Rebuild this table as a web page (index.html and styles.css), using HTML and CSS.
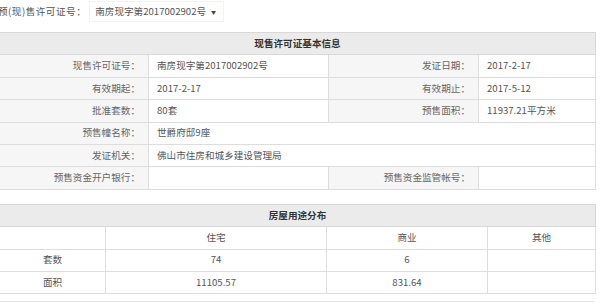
FILE: index.html
```html
<!DOCTYPE html>
<html lang="zh-CN">
<head>
<meta charset="utf-8">
<title>预售许可证</title>
<link rel="stylesheet" href="styles.css">
</head>
<body>
<div class="page">
  <div class="picker">
    <span class="picker-label">预(现)售许可证号：</span>
    <span class="picker-box">南房现字第2017002902号<span class="caret">▼</span></span>
  </div>

  <table class="info">
    <colgroup>
      <col class="c1"><col class="c2"><col class="c3"><col class="c4">
    </colgroup>
    <tr class="head"><th colspan="4">现售许可证基本信息</th></tr>
    <tr><td class="lbl">现售许可证号：</td><td>南房现字第2017002902号</td><td class="lbl">发证日期：</td><td>2017-2-17</td></tr>
    <tr><td class="lbl">有效期起：</td><td>2017-2-17</td><td class="lbl">有效期止：</td><td>2017-5-12</td></tr>
    <tr><td class="lbl">批准套数：</td><td>80套</td><td class="lbl">预售面积：</td><td>11937.21平方米</td></tr>
    <tr><td class="lbl">预售幢名称：</td><td colspan="3">世爵府邸9座</td></tr>
    <tr><td class="lbl">发证机关：</td><td colspan="3">佛山市住房和城乡建设管理局</td></tr>
    <tr><td class="lbl">预售资金开户银行：</td><td></td><td class="lbl">预售资金监管帐号：</td><td></td></tr>
  </table>

  <table class="usage">
    <colgroup>
      <col class="u1"><col class="u2"><col class="u3"><col class="u4">
    </colgroup>
    <tr class="head"><th colspan="4">房屋用途分布</th></tr>
    <tr><td></td><td>住宅</td><td>商业</td><td>其他</td></tr>
    <tr><td>套数</td><td>74</td><td>6</td><td></td></tr>
    <tr><td>面积</td><td>11105.57</td><td>831.64</td><td></td></tr>
  </table>

  <div class="next"></div>
</div>
</body>
</html>
```

FILE: styles.css
```css
html, body {
  margin: 0;
  padding: 0;
  background: #ffffff;
  overflow: hidden;
}

body {
  font-family: "Noto Sans CJK SC", "Microsoft YaHei", sans-serif;
  font-size: 9.6px;
  color: #555;
}

.page {
  width: 601px;
  margin-left: -1px;
}

.picker {
  display: flex;
  align-items: center;
  height: 22px;
  margin-left: -1px;
}

.picker-label {
  color: #555;
  letter-spacing: 0.5px;
}

.picker-box {
  display: inline-flex;
  align-items: center;
  height: 19px;
  margin-left: 3px;
  padding: 0 7px 0 5px;
  border: 1px solid #f3f3f3;
  color: #555;
}

.caret {
  font-size: 5px;
  margin-left: 5px;
  color: #444;
}

table {
  border-collapse: collapse;
  table-layout: fixed;
  width: 596px;
}

th, td {
  border: 1px solid #dddddd;
  height: 21.4px;
  padding: 0 8px;
  line-height: 1;
  white-space: nowrap;
  overflow: hidden;
}

.info {
  margin-top: 10px;
}

.head th {
  background: #ebebeb;
  font-weight: bold;
  color: #333;
  text-align: center;
  border-color: #d8d8d8;
}

.c1 { width: 149px; }
.c2 { width: 180px; }
.c3 { width: 150px; }
.c4 { width: 117px; }

.info td {
  text-align: left;
}

.info td.lbl {
  text-align: right;
  background: #f6f6f6;
  color: #666;
}

.usage {
  margin-top: 14px;
}

.u1 { width: 106px; }
.u2 { width: 221px; }
.u3 { width: 161px; }
.u4 { width: 108px; }

.usage td {
  text-align: center;
  color: #555;
}

.next {
  margin-top: 7px;
  height: 10px;
  border-top: 1px solid #e6e6e6;
  width: 596px;
}
```
